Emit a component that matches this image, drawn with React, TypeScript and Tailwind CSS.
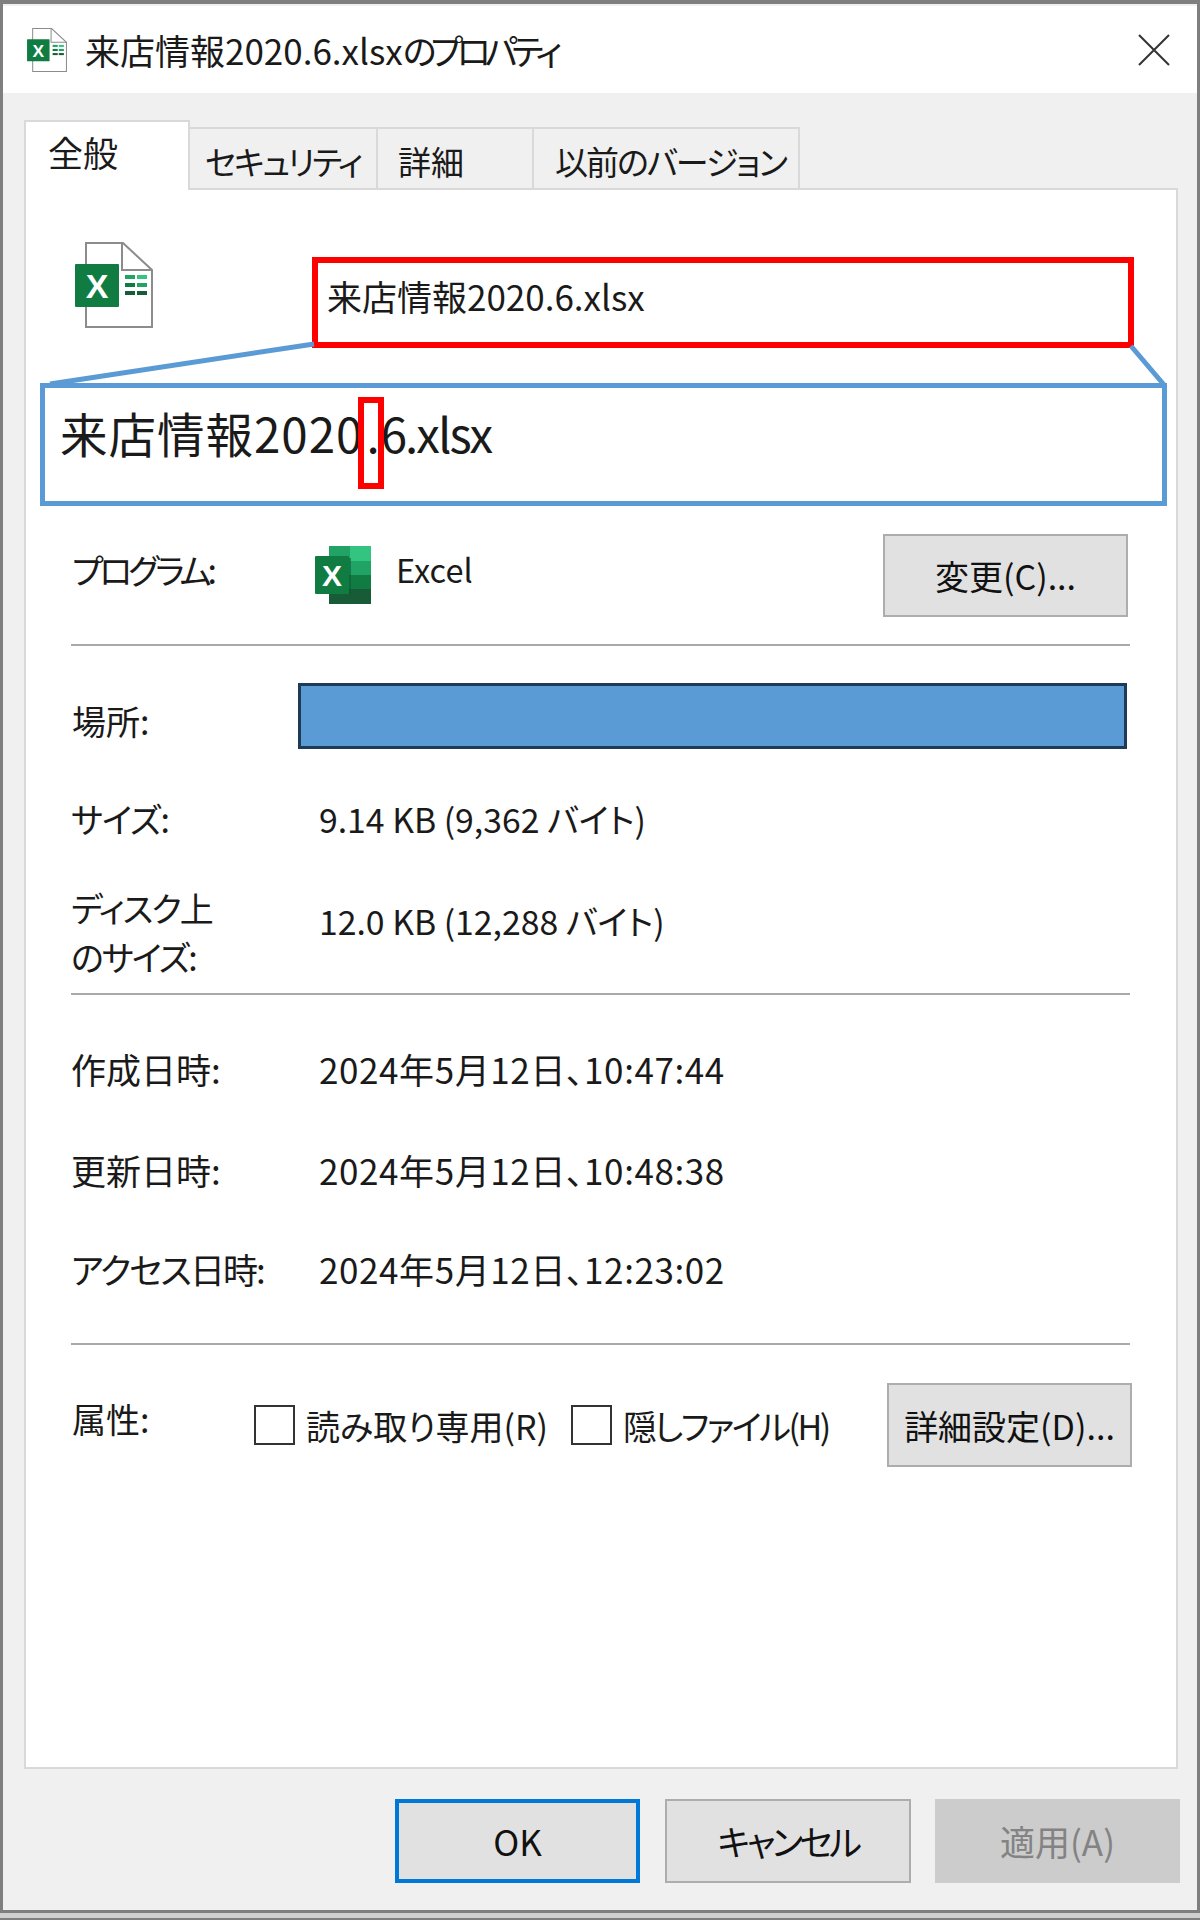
import React from 'react';

const TABS = [
  { label: 'セキュリティ', width: 'w-[188px]', pad: 'pl-[15px]', track: 'tracking-[-2.5px]' },
  { label: '詳細', width: 'w-[156px]', pad: 'pl-[20px]', track: '' },
  { label: '以前のバージョン', width: 'w-[266px]', pad: 'pl-[21px]', track: 'tracking-[-2px]' },
];

function FileIcon({ className }: { className: string }) {
  return (
    <svg viewBox="0 0 78 86" className={className}>
      <path d="M11 1h37l29 27v57H11z" fill="#fff" stroke="#8c8c8c" strokeWidth="2" />
      <path d="M47 1v27h30" fill="none" stroke="#8c8c8c" strokeWidth="2" />
      <rect x="0" y="22" width="44" height="43" rx="1" fill="#107c41" />
      <text x="22" y="56" textAnchor="middle" fontSize="34" fontWeight="700" fill="#fff" fontFamily="Liberation Sans, sans-serif">
        X
      </text>
      <rect x="50" y="33" width="10" height="4" fill="#21a366" />
      <rect x="62" y="33" width="10" height="4" fill="#33c481" />
      <rect x="50" y="41" width="10" height="4" fill="#107c41" />
      <rect x="62" y="41" width="10" height="4" fill="#21a366" />
      <rect x="50" y="49" width="10" height="4" fill="#185c37" />
      <rect x="62" y="49" width="10" height="4" fill="#185c37" />
    </svg>
  );
}

function ExcelIcon() {
  return (
    <svg viewBox="0 0 56 58" className="w-[56px] h-[58px] shrink-0">
      <rect x="14" y="0" width="21" height="15" fill="#21a366" />
      <rect x="35" y="0" width="21" height="15" fill="#33c481" />
      <rect x="14" y="15" width="42" height="14" fill="#21a366" />
      <rect x="14" y="29" width="42" height="14" fill="#107c41" />
      <rect x="14" y="43" width="42" height="15" fill="#185c37" />
      <rect x="14" y="12" width="22" height="36" fill="#0b5a30" opacity="0.55" />
      <rect x="0" y="10" width="34" height="38" rx="1" fill="#107c41" />
      <text x="17" y="40" textAnchor="middle" fontSize="30" fontWeight="700" fill="#fff" fontFamily="Liberation Sans, sans-serif">
        X
      </text>
    </svg>
  );
}

function Button({ label, className }: { label: string; className: string }) {
  return (
    <button className={`flex items-center justify-center shrink-0 bg-[#e1e1e1] border-2 border-[#adadad] text-[#111] ${className}`}>
      {label}
    </button>
  );
}

function Divider({ className }: { className: string }) {
  return <div className={`ml-[45px] w-[1059px] h-[2px] bg-[#a9a9a9] ${className}`} />;
}

function DateRow({ label, value, className, labelTrack = '' }: { label: string; value: string; className: string; labelTrack?: string }) {
  return (
    <div className={`flex items-center h-[48px] shrink-0 text-[35px] leading-[48px] ${className}`}>
      <div className={`ml-[45px] w-[248px] shrink-0 ${labelTrack}`}>{label}</div>
      <div className="tracking-[0.6px] [font-feature-settings:'normal']">{value}</div>
    </div>
  );
}

function Checkbox({ label, className, track = '' }: { label: string; className: string; track?: string }) {
  return (
    <div className={`flex items-center shrink-0 ${className}`}>
      <div className="w-[41px] h-[40px] bg-white border-2 border-[#333] shrink-0" />
      <span className={`ml-[11px] text-[34px] ${track}`}>{label}</span>
    </div>
  );
}

export default function App() {
  return (
    <div className="relative w-[1200px] h-[1920px] flex flex-col overflow-hidden bg-[#f0f0f0] text-[#1a1a1a] font-['Noto_Sans_CJK_JP',sans-serif] [font-feature-settings:'palt']">
      {/* window frame */}
      <div className="flex flex-col w-[1200px] h-[1913px] pt-[2px] border-[3px] border-t-[4px] border-[#7f7f7f] shrink-0">
        {/* title bar */}
        <div className="flex items-center h-[87px] shrink-0 bg-white">
          <FileIcon className="ml-[24px] w-[40px] h-[44px] shrink-0" />
          <div className="ml-[18px] text-[35px] leading-none whitespace-nowrap">
            来店情報2020.6.xlsx<span className="tracking-[-6px]">のプロパティ</span>
          </div>
          <svg viewBox="0 0 32 32" className="ml-auto mr-[27px] w-[32px] h-[32px] shrink-0">
            <path d="M1 1l30 30M31 1L1 31" stroke="#333" strokeWidth="2" fill="none" />
          </svg>
        </div>

        {/* tabs */}
        <div className="flex items-end h-[95px] ml-[21px] shrink-0">
          <div className="relative z-10 w-[166px] h-[70px] -mb-[2px] pl-[22px] pt-[6px] bg-white border-2 border-b-0 border-[#d9d9d9] text-[35px] leading-[48px]">
            全般
          </div>
          {TABS.map((tab) => (
            <div key={tab.label} className={`${tab.width} ${tab.pad} ${tab.track} h-[61px] pt-[10px] bg-[#f0f0f0] border-2 border-l-0 border-b-0 border-[#d9d9d9] text-[33px] leading-[44px] whitespace-nowrap`}>
              {tab.label}
            </div>
          ))}
        </div>

        {/* panel */}
        <div className="flex flex-col ml-[21px] w-[1154px] h-[1581px] shrink-0 bg-white border-2 border-[#d9d9d9]">
          <div className="flex items-start h-[193px] shrink-0">
            <FileIcon className="ml-[49px] mt-[52px] w-[78px] h-[86px] shrink-0" />
            <div className="ml-[159px] mt-[67px] w-[822px] h-[91px] pl-[9px] pt-[5px] border-[6px] border-[#ff0000] text-[35px] leading-[56px]">
              来店情報2020.6.xlsx
            </div>
          </div>

          <div className="relative ml-[14px] w-[1127px] h-[123px] shrink-0 pl-[15px] pt-[9px] border-[5px] border-[#5b9bd5] text-[47.5px] leading-[72px] whitespace-nowrap">
            <span className="tracking-[1px]">来店情報2020</span>
            <span className="ml-[3px] mr-[1px]">.</span>
            <span className="tracking-[-2px]">6.xlsx</span>
            <div className="absolute left-[313px] top-[9px] w-[26px] h-[92px] border-[6px] border-[#ff0000]" />
          </div>

          <div className="flex items-center h-[138px] shrink-0">
            <div className="ml-[46px] w-[243px] shrink-0 text-[34px] -mt-[12px] tracking-[-4px]">プログラム:</div>
            <ExcelIcon />
            <div className="ml-[25px] text-[32.5px] -mt-[12px]">Excel</div>
            <Button label="変更(C)..." className="ml-auto mr-[48px] w-[245px] h-[83px] text-[34px]" />
          </div>

          <Divider className="shrink-0" />

          <div className="flex items-center h-[138px] mt-[1px] shrink-0">
            <div className="ml-[46px] w-[226px] shrink-0 text-[34px] mt-[8px]">場所:</div>
            <div className="w-[829px] h-[66px] bg-[#5b9bd5] border-[3px] border-[#1f3a57]" />
          </div>

          <div className="flex items-center h-[48px] mt-[10px] shrink-0 text-[34px] leading-[48px]">
            <div className="ml-[45px] w-[248px] shrink-0 tracking-[-1px]">サイズ:</div>
            <div className="text-[33.75px]">9.14 KB (9,362 バイト)</div>
          </div>

          <div className="flex items-center mt-[40px] h-[98px] shrink-0 text-[34px] leading-[49px]">
            <div className="ml-[45px] w-[248px] shrink-0 tracking-[-2px]">
              ディスク上
              <br />
              のサイズ:
            </div>
            <div className="-mt-[24px] text-[33.75px]">12.0 KB (12,288 バイト)</div>
          </div>

          <Divider className="mt-[12px] shrink-0" />

          <DateRow label="作成日時:" value="2024年5月12日、10:47:44" className="mt-[50px]" />
          <DateRow label="更新日時:" value="2024年5月12日、10:48:38" className="mt-[53px]" />
          <DateRow label="アクセス日時:" labelTrack="tracking-[-2px]" value="2024年5月12日、12:23:02" className="mt-[51px]" />

          <Divider className="mt-[50px] shrink-0" />

          <div className="flex items-center h-[160px] shrink-0">
            <div className="ml-[46px] w-[182px] shrink-0 text-[34px] -mt-[14px]">属性:</div>
            <Checkbox label="読み取り専用(R)" className="w-[317px]" />
            <Checkbox label="隠しファイル(H)" track="tracking-[-2.5px]" className="w-[316px]" />
            <Button label="詳細設定(D)..." className="w-[245px] h-[84px] text-[34px]" />
          </div>
        </div>

        {/* dialog buttons */}
        <div className="flex justify-end gap-[24px] mt-[30px] pr-[17px] shrink-0">
          <Button label="OK" className="mr-[1px] w-[245px] h-[84px] text-[35px] !border-[4px] !border-[#0078d7]" />
          <Button label="キャンセル" className="w-[246px] h-[84px] text-[35px] tracking-[-3.5px]" />
          <button className="flex items-center justify-center w-[245px] h-[84px] shrink-0 bg-[#cccccc] text-[35px] text-[#838383]">適用(A)</button>
        </div>
      </div>
      <div className="h-[5px] shrink-0 bg-[#d0d0d0]" />
      <div className="h-[2px] shrink-0 bg-[#7f7f7f]" />

      {/* callout connector lines */}
      <svg className="absolute inset-0 pointer-events-none" width="1200" height="1920">
        <line x1="314" y1="344" x2="50" y2="384" stroke="#5b9bd5" strokeWidth="5" />
        <line x1="1131" y1="346" x2="1165" y2="386" stroke="#5b9bd5" strokeWidth="5" />
      </svg>
    </div>
  );
}
